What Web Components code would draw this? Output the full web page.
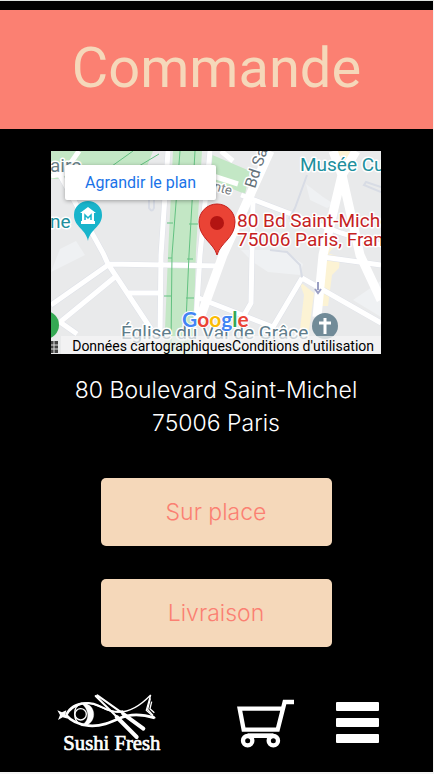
<!DOCTYPE html>
<html lang="fr">
<head>
<meta charset="utf-8">
<meta name="viewport" content="width=device-width, initial-scale=1">
<title>Commande – Sushi Fresh</title>
<style>
html { background: #f5f5f5; }
body { margin: 0; font-family: Inter, "Open Sans", sans-serif; }
</style>
</head>
<body>
<order-page>
  <page-title slot="title">Commande</page-title>
  <location-map></location-map>
  <shop-address><span>80 Boulevard Saint-Michel</span><span>75006 Paris</span></shop-address>
  <order-choices>
    <choice-button>Sur place</choice-button>
    <choice-button>Livraison</choice-button>
  </order-choices>
  <bottom-nav slot="nav"></bottom-nav>
</order-page>
<script>
function define(name, html) {
  const template = document.createElement('template');
  template.innerHTML = html;
  customElements.define(name, class extends HTMLElement {
    constructor() {
      super();
      this.attachShadow({ mode: 'open' }).append(template.content.cloneNode(true));
    }
  });
}

define('order-page', `
<style>
:host { display: flex; flex-direction: column; background: #000; color: #fff; border-top: 1px solid #dfe3e0; border-right: 1px solid #f5f5f5; padding-top: 9px; }
main { display: flex; flex-direction: column; align-items: center; padding: 22px 52px 0 51px; }
</style>
<slot name="title"></slot>
<main><slot></slot></main>
<slot name="nav"></slot>`);

define('page-title', `
<style>
:host { display: block; background: #fb8072; color: #f5d8ba; padding: 25px 16px 28px; text-align: center; }
h1 { margin: 0; font: 400 56px/66px Roboto, sans-serif; }
</style>
<h1><slot></slot></h1>`);

define('shop-address', `
<style>
:host { display: flex; flex-direction: column; text-align: center; padding-top: 20px; font-size: 23px; line-height: 33px; font-weight: 300; }
</style>
<slot></slot>`);

define('order-choices', `
<style>:host { display: flex; flex-direction: column; width: 70%; gap: 33px; padding: 38px 0 44px; }</style>
<slot></slot>`);

define('choice-button', `
<style>
:host { display: block; }
button { width: 100%; min-height: 68px; border: 0; border-radius: 5px; background: #f5d8ba; color: #fb8072; font: 300 23px/33px Inter, sans-serif; cursor: pointer; }
</style>
<button type="button"><slot></slot></button>`);

define('bottom-nav', `
<style>
:host { display: block; }
nav { display: flex; align-items: center; justify-content: space-between; padding: 0 54px 17px 57px; min-height: 64px; }
.tools { display: flex; align-items: center; gap: 42px; }
a, button { display: block; padding: 0; border: 0; background: none; color: #fff; cursor: pointer; }
svg { display: block; }
</style>
<nav aria-label="Navigation principale">
  <a href="#accueil" aria-label="Sushi Fresh">
    <svg width="104" height="60" viewBox="51 39 312 180" fill="none" stroke="#fff">
      <path d="M52 91 66 97 79 91 76 104 84 116 68 112 54 120 60 105Z" fill="#fff" stroke="none"/>
      <path d="M77 104C88 82 110 68 140 69C178 72 195 94 232 96C268 98 304 74 332 45L319 91 346 115" stroke-width="4"/>
      <path d="M80 104C98 72 145 60 176 77C204 91 222 99 250 94" stroke-width="6"/>
      <path d="M77 104C92 122 116 134 146 137C184 140 212 127 238 115C269 101 304 101 344 114" stroke-width="8"/>
      <path d="M331 55 323 88 339 106M335 65 330 86 343 98" stroke-width="4"/>
      <path d="M122 68C174 66 174 139 124 137C152 120 148 88 122 68Z" fill="#fff"/>
      <path d="M122 71C98 80 98 122 122 134" stroke-width="4"/>
      <circle cx="122" cy="103" r="17" fill="#000" stroke-width="4"/>
      <path d="M167 48 250 130M172 46 262 110" stroke-width="6" stroke-linecap="round"/>
      <path d="M230 111 290 171M250 102 310 146" stroke-width="12" stroke-linecap="round"/>
      <text x="70" y="211" fill="#fff" stroke-width="2" font-family="Liberation Serif, serif" font-size="62">Sushi Fresh</text>
    </svg>
  </a>
  <div class="tools">
    <button type="button" aria-label="Panier">
      <svg width="57" height="49" viewBox="51 54 171 147" fill="none" stroke="#fff" stroke-width="13">
        <path d="M222 63H194L173 146H71L59 83H188"/>
        <path d="M83 164H160" stroke-width="14"/>
        <circle cx="83" cy="179" r="14"/><circle cx="160" cy="179" r="14"/>
      </svg>
    </button>
    <button type="button" aria-label="Menu">
      <svg width="43" height="42" viewBox="0 0 43 42" fill="#fff">
        <rect width="43" height="9" rx="1"/><rect y="16" width="43" height="9" rx="1"/><rect y="32" width="43" height="9" rx="1"/>
      </svg>
    </button>
  </div>
</nav>`);

define('location-map', `
<style>
:host { display: block; position: relative; width: 100%; overflow: hidden; background: #e9eaeb; font-family: Roboto, sans-serif; }
svg { display: block; width: 100%; height: auto; }
.enlarge { position: absolute; top: 14px; left: 14px; padding: 0 20px; border-radius: 2px; background: #fff; color: #1a73e8; font-size: 16px; line-height: 35px; text-decoration: none; box-shadow: 0 1px 4px #0005; }
.legal { position: absolute; right: 0; bottom: 0; left: 10px; display: flex; justify-content: flex-end; padding-right: 7px; background: #f5f5f5b8; color: #000; font-size: 14px; line-height: 16px; padding-top: 2px; white-space: nowrap; }
.legal a { color: inherit; text-decoration: none; }
</style>
<svg viewBox="0 0 330 203" role="img" aria-label="Plan du 80 Boulevard Saint-Michel, Paris">
  <rect width="330" height="203" fill="#e9eaeb"/>
  <path d="M9 98 25 90 34 104 0 121ZM190 99H232L252 113 249 124 217 121 202 111ZM330 130 302 149 330 166ZM255 33 272 46 283 53 276 57 259 49Z" fill="#eff1f3"/>
  <g fill="#c3e7c5">
    <path d="M0 0H102L91 28H0ZM122 0H151L145 99 142 203H113L117 104ZM159 3 199 20 194 43 159 29Z"/>
  </g>
  <path d="M273 101 289 106 288 117 281 124 277 155H271ZM248 130 263 142 257 187H248L253 144ZM274 106 283 96 282 88 275 91ZM286 0H299L297 9H287Z" fill="#fcf3d4"/>
  <g fill="none" stroke="#dee1e8" stroke-width="6">
    <path d="M9 24 52 102 57 113 100 178M57 114 0 154M64 126 9 171 26 183M57 113 169 115M76 142H111M117 0 110 104 109 185M159 0 149 104 145 170M200 44 172 104 148 170M190 44 290 82 330 94M202 51 200 152 192 166M282 0 291 24 309 104 330 149M305 0 291 24 272 104 266 166M272 106 330 114M251 127 330 172M251 127 222 176 145 146"/>
  </g>
  <g fill="none" stroke="#fff" stroke-width="5">
    <path d="M0 25 12 23 28 0M9 24 52 102 57 113 100 178M57 114 0 154M64 126 9 171 26 183M57 113 169 115M76 142H111M117 0 110 104 109 185M159 0 149 104 145 170M202 51 200 152 192 166M272 106 330 114M251 127 330 172M251 127 222 176 145 146M190 44 290 82 330 94M159 24 187 33M170 0 182 10"/>
    <path d="M219 0 172 104 148 170M282 0 291 24 309 104 330 149M305 0 291 24 272 104 266 166" stroke-width="9"/>
  </g>
  <g fill="none" stroke="#d8dce5" stroke-width="2">
    <path d="M256 24 244 57 238 68M219 99 236 101 249 114 251 126M98 45V57Q101 62 103 57V48M330 41 313 34 315 31 330 36"/>
  </g>
  <g fill="none" stroke="#63c181">
    <path d="M61 15 82 0M88 15 108 3M129 0 121 104 120 193M144 0 138 104 134 193M116 72H122M138 73H147M117 107H121M136 108H142M113 145H120M135 147H143"/>
  </g>
  <g font-size="19" stroke="#fff" stroke-width="3" stroke-linejoin="round" paint-order="stroke">
    <text x="-1" y="21" fill="#698087">aire</text>
    <text x="-1" y="77" fill="#218f9d">ne</text>
    <text x="249" y="20" fill="#218f9d">Musée Cu</text>
    <text x="70" y="188" fill="#607d8b">Église du Val de Grâce</text>
    <text transform="translate(204 38) rotate(-72)" fill="#65727a" font-size="16">Bd Saint-Michel</text>
    <text transform="translate(162 39) rotate(16)" fill="#747b80" font-size="13">nte</text>
    <g fill="#c5221f"><text x="186" y="76">80 Bd Saint-Michel</text><text x="186" y="95">75006 Paris, France</text></g>
  </g>
  <path d="M37 90C35 78 23 76 23 64A14 14 0 0 1 51 64C51 76 39 78 37 90Z" fill="#18b4cb"/>
  <path d="M29 62 37 56 45 62ZM30 70H44V73H30ZM31 62H43V71H31Z" fill="#fff"/><path d="M34 69V64L37 67 40 64V69" fill="none" stroke="#18b4cb" stroke-width="1.500"/>
  <path d="M166 104C163 92 148 87 148 71A18 18 0 0 1 184 71C184 87 169 92 166 104Z" fill="#ea4335" stroke="#c5221f"/>
  <circle cx="166" cy="72" r="7" fill="#b31412"/>
  <path d="M267 131V139M264 138 267 142 270 138" fill="none" stroke="#9a9fc3" stroke-width="2"/>
  <circle cx="-6" cy="174" r="14" fill="#34a853"/>
  <circle cx="274" cy="175" r="13" fill="#718b98"/><path d="M274 167V183M268 172H280" stroke="#fff" stroke-width="3"/>
  <text x="131" y="176" font-size="21" font-weight="700" font-family="Lato, sans-serif" stroke="#fff" stroke-width="2" paint-order="stroke"><tspan fill="#4285f4">G</tspan><tspan fill="#ea4335">o</tspan><tspan fill="#fbbc04">o</tspan><tspan fill="#4285f4">g</tspan><tspan fill="#34a853">l</tspan><tspan fill="#ea4335">e</tspan></text>
  <path d="M0 190H7V202H0Z" fill="#444"/><path d="M0 194H7M0 198H7M3 190V202" stroke="#ddd"/>
</svg>
<a class="enlarge" href="#plan">Agrandir le plan</a>
<div class="legal"><span>Données cartographiques</span><a href="#conditions">Conditions d'utilisation</a></div>`);
</script>
</body>
</html>
